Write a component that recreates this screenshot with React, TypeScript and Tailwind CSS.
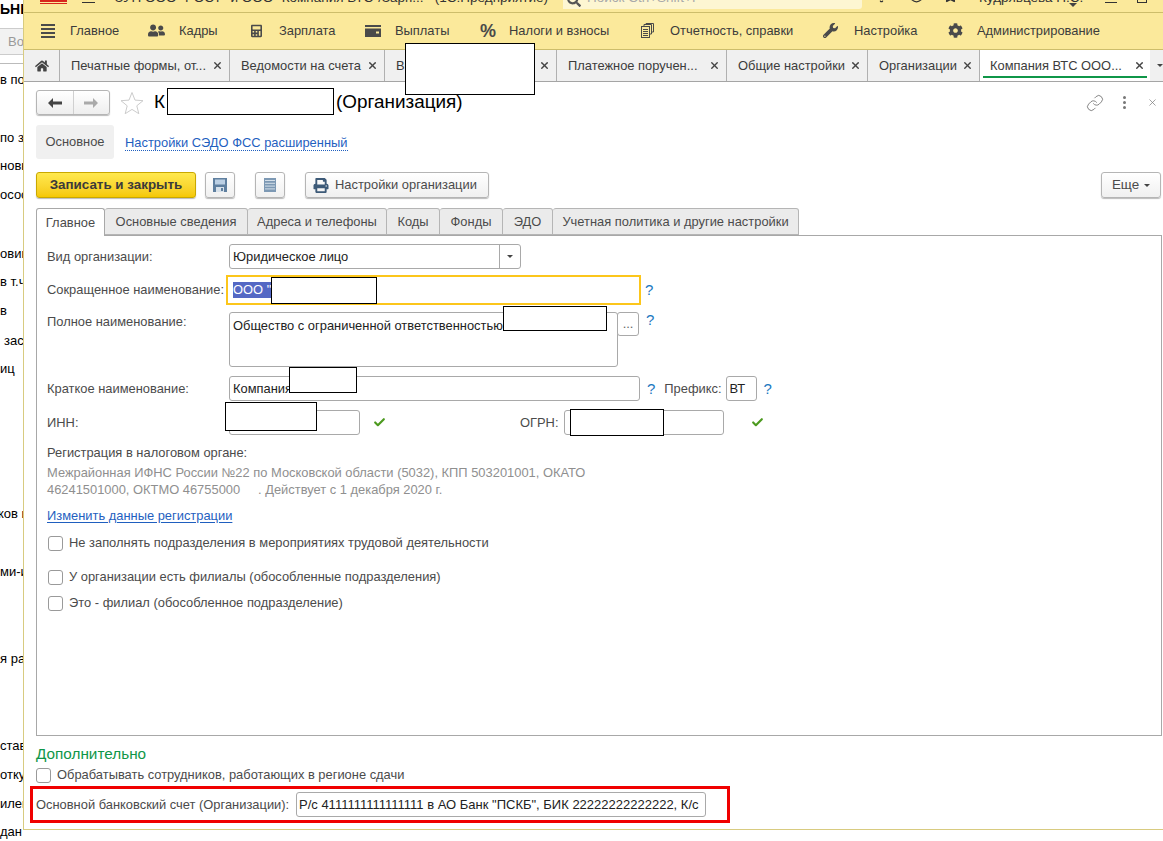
import { FaCalculator, FaCog, FaHome, FaPrint, FaSearch, FaStar, FaUserFriends, FaWrench } from "react-icons/fa";
import { Link, X, Check, Bell, Clock } from "lucide-react";

const sideRows = [
  { text: "в по", cls: "mt-[8px]" },
  { text: "по за", cls: "mt-[42px]" },
  { text: "новк", cls: "mt-[12px]" },
  { text: "осос", cls: "mt-[13px]" },
  { text: "овин", cls: "mt-[43px]" },
  { text: "в т.ч", cls: "mt-[12px]" },
  { text: "в", cls: "mt-[13px]" },
  { text: " зас", cls: "mt-[14px] pl-[4px]" },
  { text: "иц", cls: "mt-[12px]" },
  { text: "ков и", cls: "mt-[129px] -ml-[2px]" },
  { text: "ми-и", cls: "mt-[42px]" },
  { text: "я ра", cls: "mt-[71px]" },
  { text: "став", cls: "mt-[71px]" },
  { text: "отку", cls: "mt-[13px]" },
  { text: "илен", cls: "mt-[13px]" },
  { text: "дан", cls: "mt-[12px]" },
];

const menu = [
  { label: "Главное", icon: <BurgerIcon />, iconBox: "w-[46px] pl-[17px]", cls: "w-[124px]" },
  { label: "Кадры", icon: <FaUserFriends className="w-[17px] h-[17px]" />, iconBox: "w-[31px]", cls: "w-[103px]" },
  { label: "Зарплата", icon: <FaCalculator className="w-[11px] h-[14px]" />, iconBox: "w-[28px]", cls: "w-[114px]" },
  { label: "Выплаты", icon: <WalletIcon />, iconBox: "w-[30px]", cls: "w-[115px]" },
  { label: "Налоги и взносы", icon: <span className="text-[18px] font-bold leading-none">%</span>, iconBox: "w-[29px]", cls: "w-[161px]" },
  { label: "Отчетность, справки", icon: <ReportIcon />, iconBox: "w-[29px]", cls: "w-[182px]" },
  { label: "Настройка", icon: <FaWrench className="w-[15px] h-[15px]" />, iconBox: "w-[31px]", cls: "w-[125px]" },
  { label: "Администрирование", icon: <FaCog className="w-[15px] h-[15px]" />, iconBox: "w-[29px]", cls: "w-[160px]" },
];

const openTabs = [
  { label: "Печатные формы, от...", cls: "w-[170px]" },
  { label: "Ведомости на счета", cls: "w-[155px]" },
  { label: "В", cls: "w-[172px]" },
  { label: "Платежное поручен...", cls: "w-[170px]" },
  { label: "Общие настройки", cls: "w-[141px]" },
  { label: "Организации", cls: "w-[112px]" },
];

const formTabs = [
  { label: "Основные сведения", cls: "w-[143px]" },
  { label: "Адреса и телефоны", cls: "w-[139px]" },
  { label: "Коды", cls: "w-[53px]" },
  { label: "Фонды", cls: "w-[63px]" },
  { label: "ЭДО", cls: "w-[50px]" },
  { label: "Учетная политика и другие настройки", cls: "w-[246px]" },
];

const redactions = [
  "left-[405px] top-[43px] w-[130px] h-[52px]",
  "left-[167px] top-[88px] w-[167px] h-[27px]",
  "left-[271px] top-[277px] w-[106px] h-[27px]",
  "left-[503px] top-[306px] w-[104px] h-[25px]",
  "left-[289px] top-[367px] w-[68px] h-[26px]",
  "left-[225px] top-[402px] w-[92px] h-[29px]",
  "left-[570px] top-[409px] w-[94px] h-[27px]",
];

function BurgerIcon() {
  return (
    <svg width="14" height="14" viewBox="0 0 14 14" fill="currentColor">
      <rect y="0" width="14" height="2" />
      <rect y="4" width="14" height="2" />
      <rect y="8" width="14" height="2" />
      <rect y="12" width="14" height="2" />
    </svg>
  );
}

function WalletIcon() {
  return (
    <svg width="16" height="12" viewBox="0 0 16 12" fill="currentColor">
      <rect width="16" height="2" />
      <path d="M0 3.5h16V12H0z M11 6.5v2h3v-2z" fillRule="evenodd" />
    </svg>
  );
}

function ReportIcon() {
  return (
    <svg width="13" height="15" viewBox="0 0 13 15" fill="none" stroke="currentColor">
      <rect x="0.5" y="3.5" width="8" height="11" />
      <path d="M3 3V1.500h7.500V11H9M5 1V0.500h7.500V9H11M2 6.500h5M2 8.500h5M2 10.500h5M2 12.500h5" />
    </svg>
  );
}

function SaveIcon() {
  return (
    <svg width="14" height="14" viewBox="0 0 14 14">
      <path d="M0 0h14v14H0z" fill="#5f7f9f" />
      <rect x="2" y="1.500" width="10" height="5" fill="#bcd0e4" />
      <rect x="3" y="9" width="8" height="5" fill="#d7e1ea" />
      <rect x="8" y="10" width="2" height="3" fill="#5f7f9f" />
    </svg>
  );
}

function ListIcon() {
  return (
    <svg width="12" height="14" viewBox="0 0 12 14">
      <rect width="12" height="14" fill="#7d99b4" />
      <path d="M1 2.500h10M1 5.300h10M1 8.100h10M1 10.900h10" stroke="#d5e0ea" />
    </svg>
  );
}

function ArrowIcon({ back, color }: { back?: boolean; color: string }) {
  return (
    <svg width="14" height="10" viewBox="0 0 14 10" fill={color} className={back ? "" : "rotate-180"}>
      <path d="M0 5l5-5v3.500h9v3H5V10z" />
    </svg>
  );
}

function Caret({ cls = "" }: { cls?: string }) {
  return <span className={"w-0 h-0 border-x-[3px] border-x-transparent border-t-[3px] border-t-[#444] " + cls} />;
}

function Hint({ cls = "" }: { cls?: string }) {
  return <span className={"text-[#1b78bf] text-[15px] leading-none " + cls}>?</span>;
}

function Box({ cls, children }: { cls: string; children?: React.ReactNode }) {
  return (
    <div className={"border border-[#a9a9a9] rounded-[3px] bg-white flex items-center text-[#222] whitespace-nowrap overflow-hidden " + cls}>
      {children}
    </div>
  );
}

function CheckRow({ label, cls }: { label: string; cls: string }) {
  return (
    <label className={"flex items-center h-[16px] " + cls}>
      <span className="w-[15px] h-[15px] border border-[#9a9a9a] rounded-[3px] bg-white" />
      <span className="ml-[6px] text-[#4b4b4b]">{label}</span>
    </label>
  );
}

function Btn({ cls, children }: { cls: string; children: React.ReactNode }) {
  return (
    <button className={"h-[26px] flex items-center border border-[#b5b5b5] rounded-[3px] bg-gradient-to-b from-white to-[#f0f0f0] shadow-[0_1px_1px_#bbb] " + cls}>
      {children}
    </button>
  );
}

export default function App() {
  return (
    <div className="relative w-[1163px] h-[841px] overflow-hidden bg-white flex items-start text-[12.9px] text-[#4b4b4b] font-['Liberation_Sans',Arial,sans-serif]">
      {/* окно за формой, видна только полоска слева */}
      <div className="w-[23px] h-[841px] shrink-0 overflow-hidden text-black text-[13px] whitespace-nowrap">
        <div className="mt-[1px] h-[16px] font-bold leading-[16px] text-[14px]">ЬНЫ</div>
        <div className="mt-[11px] h-[27px] bg-[#f2f2f2] border-y border-[#ccc] pl-[8px] leading-[25px] text-[#999]">Во</div>
        <div className="mt-[8px] h-px bg-[#bbb]" />
        {sideRows.map((row) => (
          <div key={row.text} className={"h-[16px] leading-[16px] " + row.cls}>{row.text}</div>
        ))}
      </div>

      <div className="w-[1140px] h-[830px] shrink-0 border-l border-b border-[#d8cb80] flex flex-col">
        {/* заголовок, обрезан сверху */}
        <div className="h-[13px] bg-[#fbe99b] border-b border-[#cdbd6b] overflow-hidden flex text-[13.5px] text-[#333] shrink-0">
          <div className="w-[16px]" />
          <div className="w-[27px] h-[4px] border-t-2 border-b border-[#d8261c]" />
          <div className="ml-[15px] w-[13px] h-[3px] border-b border-[#333]" />
          <div className="ml-[20px] w-[448px] -mt-[12px] whitespace-nowrap">ЗУП ООО "РОСТ" и ООО "Компания ВТС"/Зарп...&nbsp;&nbsp;&nbsp;(1С:Предприятие)</div>
          <div className="w-[299px] h-[9px] bg-[#fdf6d2] rounded-br-[3px] flex overflow-hidden">
            <FaSearch className="ml-[4px] -mt-[7px] w-[14px] h-[14px] text-[#555]" />
            <span className="ml-[6px] -mt-[12px] text-[#aaa]">Поиск Ctrl+Shift+F</span>
          </div>
          <Bell className="ml-[12px] -mt-[12px] w-[15px] h-[15px]" />
          <Clock className="ml-[20px] -mt-[12px] w-[15px] h-[15px]" />
          <FaStar className="ml-[19px] -mt-[12px] w-[15px] h-[15px]" />
          <span className="ml-[21px] -mt-[12px] w-[90px] whitespace-nowrap">Кудрявцева Н.С.</span>
          <Caret cls="mt-[3px] border-x-[4px] border-t-[4px]" />
          <span className="ml-[28px] w-[12px] h-[3px] border-b border-[#333]" />
          <span className="ml-[20px] w-[10px] h-[3px] border-x border-b border-[#333]" />
        </div>

        {/* разделы */}
        <div className="h-[37px] bg-[#fbe99b] border-b border-[#cdbd6b] flex items-center text-[#3c3c3c] shrink-0">
          {menu.map((item) => (
            <div key={item.label} className={"flex items-center shrink-0 whitespace-nowrap " + item.cls}>
              <span className={"flex items-center shrink-0 text-[#4a4a4a] " + item.iconBox}>{item.icon}</span>
              <span>{item.label}</span>
            </div>
          ))}
        </div>

        {/* открытые вкладки */}
        <div className="h-[32px] bg-[#f0f0f0] border-b border-[#a5a5a5] flex shrink-0 text-[#3c3c3c]">
          <div className="w-[36px] shrink-0 flex items-center justify-center border-r border-[#b0b0b0]">
            <FaHome className="w-[14px] h-[14px] text-[#444]" />
          </div>
          {openTabs.map((tab) => (
            <div key={tab.label} className={"shrink-0 flex items-center justify-between pl-[11px] pr-[6px] border-r border-[#b0b0b0] whitespace-nowrap " + tab.cls}>
              <span>{tab.label}</span>
              <X className="w-[11px] h-[11px] text-[#444]" strokeWidth={3} />
            </div>
          ))}
          <div className="relative w-[170px] shrink-0 bg-white flex items-center justify-between pl-[10px] pr-[5px] whitespace-nowrap">
            <span>Компания ВТС ООО...</span>
            <X className="w-[11px] h-[11px] text-[#444]" strokeWidth={3} />
            <span className="absolute left-[3px] right-[3px] bottom-[3px] h-[2px] bg-[#0f9648]" />
          </div>
          <Caret cls="ml-[7px] shrink-0 self-center" />
        </div>

        {/* форма */}
        <div className="flex-1 pl-[12px] pr-[1px]">
          <div className="mt-[8px] h-[25px] flex items-center">
            <div className="w-[74px] h-[25px] flex border border-[#b5b5b5] rounded-[3px] bg-gradient-to-b from-white to-[#eee] shadow-[0_1px_1px_#bbb]">
              <span className="flex-1 flex items-center justify-center border-r border-[#d0d0d0]"><ArrowIcon back color="#444" /></span>
              <span className="flex-1 flex items-center justify-center"><ArrowIcon color="#aaa" /></span>
            </div>
            <svg className="ml-[10px]" width="24" height="24" viewBox="0 0 24 24" fill="none" stroke="#ccc">
              <path d="M12 1.500l3 7.600 8 .6-6.200 5.100 2 7.900L12 18.400l-6.800 4.300 2-7.900L1 9.700l8-.6z" />
            </svg>
            <span className="ml-[10px] text-[18.9px] text-black whitespace-nowrap">К</span>
            <span className="ml-[171px] text-[18.900px] text-black whitespace-nowrap">(Организация)</span>
            <div className="ml-auto flex items-center text-[#777]">
              <Link className="w-[18px] h-[18px]" strokeWidth={1.2} />
              <span className="ml-[19px] flex flex-col gap-[2px]">
                <span className="w-[3px] h-[3px] bg-[#777] rounded-full" />
                <span className="w-[3px] h-[3px] bg-[#777] rounded-full" />
                <span className="w-[3px] h-[3px] bg-[#777] rounded-full" />
              </span>
              <X className="ml-[21px] mr-[4px] w-[11px] h-[11px]" strokeWidth={1.5} />
            </div>
          </div>

          <div className="mt-[10px] h-[34px] flex items-center">
            <div className="w-[78px] h-[34px] bg-[#f0f0f0] rounded-[3px] flex items-center justify-center">Основное</div>
            <a className="ml-[11px] mt-[1px] text-[#1f5fbf] border-b border-dotted border-[#1f5fbf] leading-[15px]">Настройки СЭДО ФСС расширенный</a>
          </div>

          <div className="mt-[13px] flex items-center">
            <button className="w-[160px] h-[26px] rounded-[3px] border border-[#c9a800] bg-gradient-to-b from-[#ffe94d] to-[#f5c800] font-bold text-[13.4px] text-[#3a3a3a] shadow-[0_1px_1px_#bbb]">Записать и закрыть</button>
            <Btn cls="ml-[9px] w-[30px] justify-center"><SaveIcon /></Btn>
            <Btn cls="ml-[20px] w-[30px] justify-center"><ListIcon /></Btn>
            <Btn cls="ml-[20px] w-[184px] gap-[6px] pl-[7px]">
              <FaPrint className="w-[16px] h-[15px] text-[#3d5a78]" />
              <span>Настройки организации</span>
            </Btn>
            <Btn cls="ml-auto mr-[1px] w-[60px] gap-[5px] justify-center">
              <span className="text-[13.4px]">Еще</span>
              <Caret />
            </Btn>
          </div>

          <div className="mt-[10px] h-[27px] flex relative z-10">
            <div className="w-[69px] h-[28px] bg-white border border-b-0 border-[#a8a8a8] rounded-t-[3px] flex items-center justify-center">Главное</div>
            {formTabs.map((tab) => (
              <div key={tab.label} className={"h-[27px] bg-[#ebebeb] border border-l-0 border-[#b5b5b5] rounded-t-[3px] flex items-center justify-center whitespace-nowrap " + tab.cls}>
                {tab.label}
              </div>
            ))}
          </div>

          <div className="h-[501px] border border-[#a8a8a8] pl-[10px] pt-[8px]">
            <div className="flex items-center h-[25px]">
              <span className="w-[182px] shrink-0">Вид организации:</span>
              <Box cls="w-[292px] h-[25px] pl-[3px]">
                <span className="flex-1">Юридическое лицо</span>
                <span className="w-[21px] h-full border-l border-[#a9a9a9] flex items-center justify-center"><Caret /></span>
              </Box>
            </div>
            <div className="mt-[6px] flex items-center h-[30px]">
              <span className="w-[179px] shrink-0 whitespace-nowrap">Сокращенное наименование:</span>
              <div className="w-[415px] h-[30px] border-2 border-[#fcc61b] flex items-center pl-[5px] text-[#222]">
                <span className="bg-[#5468c4] text-white leading-[16px]">ООО "</span>
              </div>
              <Hint cls="ml-[4px] -mt-[2px]" />
            </div>
            <div className="mt-[7px] flex items-start h-[55px]">
              <span className="w-[182px] shrink-0">Полное наименование:</span>
              <Box cls="w-[389px] h-[55px] pl-[3px] !items-start pt-[3px]">Общество с ограниченной ответственностью</Box>
              <Box cls="-ml-px w-[22px] h-[24px] justify-center text-[#666]">...</Box>
              <Hint cls="ml-[7px]" />
            </div>
            <div className="mt-[9px] flex items-center h-[25px]">
              <span className="w-[182px] shrink-0">Краткое наименование:</span>
              <Box cls="w-[411px] h-[25px] pl-[3px]">Компания</Box>
              <Hint cls="ml-[7px]" />
              <span className="ml-[9px] whitespace-nowrap">Префикс:</span>
              <Box cls="ml-[4px] w-[31px] h-[25px] pl-[3px]">ВТ</Box>
              <Hint cls="ml-[7px]" />
            </div>
            <div className="mt-[9px] flex items-center h-[25px]">
              <span className="w-[182px] shrink-0">ИНН:</span>
              <Box cls="w-[131px] h-[25px]" />
              <Check className="ml-[13px] w-[13px] h-[13px] text-[#4c9a1f]" strokeWidth={4} />
              <span className="ml-[134px] w-[44px]">ОГРН:</span>
              <Box cls="w-[160px] h-[25px]" />
              <Check className="ml-[27px] w-[13px] h-[13px] text-[#4c9a1f]" strokeWidth={4} />
            </div>
            <div className="mt-[10px] h-[16px] leading-[16px]">Регистрация в налоговом органе:</div>
            <div className="mt-[3px] leading-[17px] text-[#8f8f8f]">
              <div>Межрайонная ИФНС России №22 по Московской области (5032), КПП 503201001, ОКАТО</div>
              <div>46241501000, ОКТМО 46755000&nbsp;&nbsp;&nbsp;&nbsp;&nbsp;. Действует с 1 декабря 2020 г.</div>
            </div>
            <a className="block mt-[10px] h-[16px] leading-[16px] w-fit text-[#1f5fbf] underline underline-offset-2">Изменить данные регистрации</a>
            <CheckRow cls="mt-[11px] ml-[1px]" label="Не заполнять подразделения в мероприятиях трудовой деятельности" />
            <CheckRow cls="mt-[18px] ml-[1px]" label="У организации есть филиалы (обособленные подразделения)" />
            <CheckRow cls="mt-[10px] ml-[1px]" label="Это - филиал (обособленное подразделение)" />
          </div>

          <div className="mt-[8px] h-[20px] leading-[20px] text-[15.300px] text-[#0f9648]">Дополнительно</div>
          <CheckRow cls="mt-[3px]" label="Обрабатывать сотрудников, работающих в регионе сдачи" />
          <div className="mt-[3px] -ml-[6px] w-[700px] h-[37px] border-[3px] border-[#f00000] flex items-center pl-[3px]">
            <span className="w-[260px] shrink-0 whitespace-nowrap">Основной банковский счет (Организации):</span>
            <Box cls="w-[410px] h-[25px] pl-[2px] text-[13px]">Р/с 4111111111111111 в АО Банк "ПСКБ", БИК 22222222222222, К/с</Box>
          </div>
        </div>
      </div>

      {/* закрашенные области */}
      {redactions.map((cls) => (
        <div key={cls} className={"absolute bg-white border border-black " + cls} />
      ))}
    </div>
  );
}
